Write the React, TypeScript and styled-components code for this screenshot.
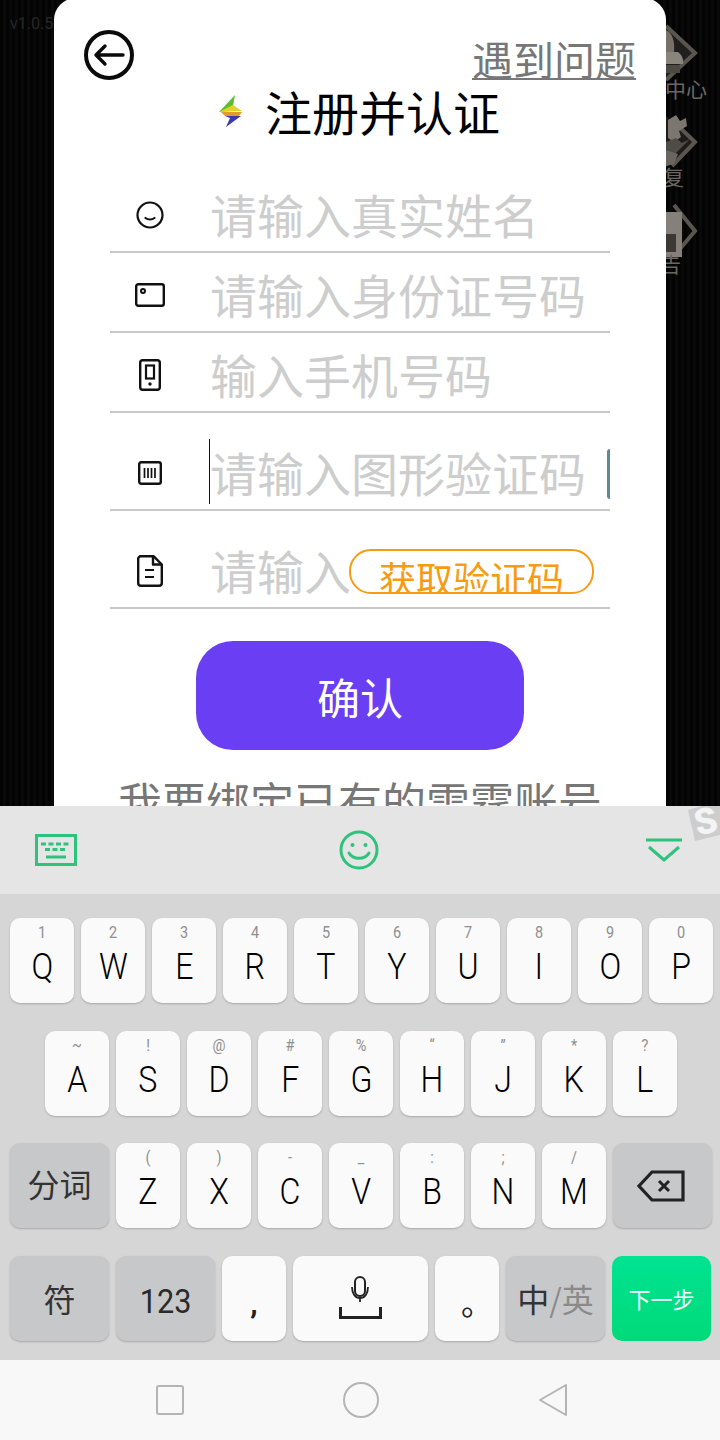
import React from "react"
import styled, { createGlobalStyle } from "styled-components"

const Global = createGlobalStyle`
  html, body {
    margin: 0;
    padding: 0;
    background: #000;
  }
  body {
    font-family: "Noto Sans CJK SC", "Noto Sans", sans-serif;
  }
  * {
    box-sizing: border-box;
  }
`

const Screen = styled.div`
  width: 720px;
  height: 1440px;
  display: flex;
  flex-direction: column;
  overflow: hidden;
  position: relative;
`

/* game scene behind the dialog */
const Scene = styled.div`
  height: 806px;
  flex: none;
  position: relative;
  overflow: hidden;
  display: flex;
  justify-content: center;
  background: repeating-linear-gradient(90deg, #030303 0 3px, #090909 3px 6px);
`

const Version = styled.div`
  position: absolute;
  left: 10px;
  top: 14px;
  font: 16px "Roboto", sans-serif;
  color: #272727;
`

const SideMenu = styled.div`
  position: absolute;
  left: 666px;
  top: 0;
  width: 54px;
`

const Card = styled.div`
  width: 612px;
  height: 900px;
  flex: none;
  background: #fff;
  border-radius: 22px;
  margin-top: -2px;
  padding: 32px 30px 0;
`

const TopRow = styled.div`
  display: flex;
  justify-content: space-between;
  align-items: flex-start;
  height: 54px;
`

const Help = styled.a`
  font-size: 41px;
  line-height: 48px;
  margin-top: 4px;
  color: #777;
  text-decoration: underline;
  text-decoration-thickness: 2px;
  text-underline-offset: 2px;
`

const TitleRow = styled.div`
  display: flex;
  justify-content: center;
  align-items: center;
  gap: 25px;
  height: 60px;
  margin-right: 4px;
`

const Title = styled.h1`
  margin: -6px 0 0;
  font-size: 47px;
  font-weight: 400;
  line-height: 60px;
  color: #000;
`

const BoltSlot = styled.div`
  display: flex;
  margin: -6px -3px 0 3px;
`

const Form = styled.div`
  margin: 29px 26px 0;
  display: flex;
  flex-direction: column;
`

const Row = styled.div<{ $tall?: boolean }>`
  height: ${p => (p.$tall ? 98 : 80)}px;
  border-bottom: 2px solid #c9c9c9;
  padding-bottom: 5px;
  display: flex;
  align-items: flex-end;
  position: relative;
  overflow: hidden;
`

const IconSlot = styled.div`
  width: 80px;
  height: 65px;
  padding-top: 3px;
  flex: none;
  display: flex;
  justify-content: center;
  align-items: center;
`

const Field = styled.div<{ $focused?: boolean }>`
  margin-left: 19px;
  font-size: 47px;
  line-height: 65px;
  height: 65px;
  color: #cdcdcd;
  white-space: nowrap;
  border-left: 1px solid ${p => (p.$focused ? "#111" : "transparent")};
`

const Captcha = styled.div`
  position: absolute;
  right: 0;
  top: 36px;
  width: 3px;
  height: 50px;
  border-radius: 3px 0 0 3px;
  background: #5f8a92;
`

const CodeButton = styled.div`
  position: absolute;
  left: 239px;
  top: 38px;
  width: 245px;
  height: 45px;
  border: 2px solid #f79b12;
  border-radius: 22px;
  background: #fff;
  color: #f79b12;
  font-size: 37px;
  line-height: 54px;
  text-align: center;
  overflow: hidden;
`

const Submit = styled.div`
  width: 328px;
  height: 109px;
  margin: 32px auto 0;
  border-radius: 37px;
  background: #6a3ef2;
  color: #fff;
  font-size: 43px;
  display: flex;
  align-items: center;
  justify-content: center;
`

const Bind = styled.div`
  margin-top: 21px;
  text-align: center;
  font-size: 44px;
  line-height: 60px;
  color: #777;
`

const Toolbar = styled.div`
  height: 88px;
  flex: none;
  background: #e5e5e5;
  display: grid;
  grid-template-columns: 1fr auto 1fr;
  align-items: center;
  padding: 0 38px 0 35px;
  position: relative;
  overflow: hidden;
`

const ToolEnd = styled.div`
  justify-self: end;
  display: flex;
`

const Keyboard = styled.div`
  height: 466px;
  flex: none;
  background: #d6d6d6;
  padding: 24px 8px 19px 10px;
  display: flex;
  flex-direction: column;
  justify-content: space-between;
`

const KeyRow = styled.div<{ $indent?: boolean }>`
  display: flex;
  gap: 7px;
  height: 85px;
  padding-left: ${p => (p.$indent ? 35 : 0)}px;
`

const Key = styled.div<{ $w?: number; $variant?: "plain" | "gray" | "green" }>`
  width: ${p => p.$w ?? 64}px;
  flex: none;
  border-radius: 10px;
  position: relative;
  display: flex;
  align-items: center;
  justify-content: center;
  color: #222;
  background: ${p =>
    p.$variant === "gray"
      ? "#c7c8ca"
      : p.$variant === "green"
      ? "linear-gradient(180deg, #00e392, #00da78)"
      : "#fafafa"};
  box-shadow: ${p => (p.$variant === "green" ? "none" : "0 1px 2px rgba(0,0,0,.22)")};
`

const Hint = styled.span`
  position: absolute;
  top: 4px;
  left: 0;
  right: 0;
  text-align: center;
  font: 17px "Roboto", sans-serif;
  color: #8f8f8f;
  transform: scaleX(0.85);
`

const Letter = styled.span`
  font: 300 36.5px "Roboto", sans-serif;
  color: #000;
  margin-top: 12px;
  transform: scaleX(0.88);
`

const Label = styled.span<{ $size?: number; $color?: string; $lift?: number }>`
  font-size: ${p => p.$size ?? 32}px;
  color: ${p => p.$color ?? "#333"};
  margin-top: ${p => -(p.$lift ?? 0)}px;
`

const NumLabel = styled.span`
  font: 34px "Roboto", sans-serif;
  color: #2a2a2a;
  margin-top: 5px;
  transform: scaleX(0.9);
`

const Comma = styled.span`
  font: 700 30px "Roboto", sans-serif;
  color: #222;
  margin-top: 10px;
`

const Period = styled.span`
  font-size: 32px;
  color: #222;
  margin: 6px 0 0 20px;
`

const BackspaceSlot = styled.div`
  display: flex;
  margin-right: 4px;
`

const NavBar = styled.div`
  height: 80px;
  flex: none;
  background: #f8f8f8;
  display: flex;
  align-items: center;
  justify-content: center;
  gap: 159px;
  padding-left: 4px;
`

const Back = () => (
  <svg width="50" height="50" viewBox="0 0 50 50" fill="none" stroke="#0a0a0a">
    <circle cx="25" cy="25" r="23" strokeWidth="4" />
    <path d="M39 25H12M21 16l-9 9 9 9" strokeWidth="3.4" strokeLinecap="round" strokeLinejoin="round" />
  </svg>
)

const Bolt = () => (
  <svg width="24" height="32" viewBox="0 0 24 32">
    <path d="M16 0 0 17l11-1 3-5z" fill="#5dbf2e" />
    <path d="M14 10 0 17l23-1z" fill="#e4d027" />
    <path d="M2 17h21l-3 4H6z" fill="#e39a2a" />
    <path d="M6 21h16L7 32l4-9z" fill="#3b3aa6" />
  </svg>
)

const Smile = () => (
  <svg width="28" height="28" viewBox="0 0 28 28" fill="none" stroke="#111" strokeWidth="2.2">
    <circle cx="14" cy="14" r="12.5" />
    <path d="M9.5 17c2.5 2 6.5 2 9 0" strokeLinecap="round" />
  </svg>
)

const IdCard = () => (
  <svg width="30" height="24" viewBox="0 0 30 24" fill="none" stroke="#111" strokeWidth="2.4">
    <rect x="1.200" y="1.200" width="27.600" height="21.600" rx="2" />
    <circle cx="8" cy="8" r="2" strokeWidth="2" />
  </svg>
)

const Phone = () => (
  <svg width="22" height="32" viewBox="0 0 22 32" fill="none" stroke="#111" strokeWidth="2.4">
    <rect x="1.200" y="1.200" width="19.600" height="29.600" rx="2.500" />
    <rect x="7" y="6.500" width="8" height="13" strokeWidth="2.2" />
    <circle cx="11" cy="25" r="1.700" fill="#111" stroke="none" />
  </svg>
)

const Barcode = () => (
  <svg width="24" height="24" viewBox="0 0 24 24" fill="none" stroke="#111" strokeWidth="2.4">
    <rect x="1.200" y="1.200" width="21.600" height="21.600" rx="2" />
    <path d="M6.500 7v10M10 7v10M13.500 7v10M17 7v10" strokeWidth="1.700" />
  </svg>
)

const Doc = () => (
  <svg width="26" height="32" viewBox="0 0 26 32" fill="none" stroke="#111" strokeWidth="2.4" strokeLinejoin="round">
    <path d="M3 1.200h13.500l8.300 8.300V28a2.800 2.800 0 0 1-2.800 2.800H4A2.800 2.800 0 0 1 1.200 28V3z" />
    <path d="M16 1.500V9.500h8.500" />
    <path d="M8 15h9M8 22h9" strokeWidth="2.2" />
  </svg>
)

const Side = () => (
  <svg width="54" height="290" viewBox="0 0 54 290" fill="none">
    {/* first badge */}
    <path d="M0 26 29 53 0 80z" fill="#211f1d" />
    <path d="M0 26 29 53 0 80" stroke="#5a564f" strokeWidth="4" />
    <path d="M0 30c6 3 9 10 8 22H0z" fill="#77716a" />
    <path d="M0 52h12c4 3 6 8 5 12H0z" fill="#8a857c" />
    <path d="M0 65h14v8H0z" fill="#4c4842" />
    {/* second badge */}
    <path d="M0 116 29 142 0 168z" fill="#1e1c1a" />
    <path d="M6 120 29 142 6 166" stroke="#5a564f" strokeWidth="4" />
    <path d="M2 120l8-5 4 6 6-3 1 8-8 5 2 6-7 5-6-4V124z" fill="#7b766e" />
    <path d="M0 142l10-4 6 5 8-4-14 14-2 10-8 3z" fill="#4f4b45" />
    <path d="M0 150l12 4-4 10-8 2z" fill="#6a655e" />
    {/* third badge */}
    <path d="M8 205 29 231 8 256" stroke="#5a564f" strokeWidth="4" />
    <path d="M0 212h16v45H0z" fill="#85807a" />
    <path d="M0 234h10v18H0z" fill="#3c3935" />
    <text x="-1" y="97" fill="#6a6762" fontSize="21" fontFamily="Noto Sans CJK SC">中心</text>
    <text x="-3" y="185" fill="#6a6762" fontSize="21" fontFamily="Noto Sans CJK SC">复</text>
    <text x="-6" y="272" fill="#6a6762" fontSize="21" fontFamily="Noto Sans CJK SC">告</text>
  </svg>
)

const KeyboardIcon = () => (
  <svg width="42" height="32" viewBox="0 0 42 32" fill="none" stroke="#2fc27c">
    <rect x="1.500" y="1.500" width="39" height="29" strokeWidth="3" />
    <path d="M6 10h30M10 15.500h22" strokeWidth="3" strokeDasharray="5 2.500" />
    <path d="M11 23h20" strokeWidth="3" />
  </svg>
)

const Emoji = () => (
  <svg width="40" height="40" viewBox="0 0 40 40" fill="none" stroke="#2fc27c" strokeWidth="3">
    <circle cx="20" cy="20" r="18" />
    <circle cx="13.500" cy="15" r="2" fill="#2fc27c" stroke="none" />
    <circle cx="26.500" cy="15" r="2" fill="#2fc27c" stroke="none" />
    <path d="M10 23c4 7 16 7 20 0" strokeLinecap="round" />
  </svg>
)

const Hide = () => (
  <svg width="36" height="24" viewBox="0 0 36 24" fill="none" stroke="#2fc27c" strokeWidth="3">
    <path d="M0 2h36M3 9l15 13L33 9" />
  </svg>
)

const SogouMark = () => (
  <SogouWrap>
    <svg width="32" height="36" viewBox="0 0 32 36">
      <path d="M0 4 32 -5v34L7 35z" fill="#cdcdcd" />
      <text x="7" y="28" fontSize="36" fontWeight="900" fontFamily="Roboto" fill="#f4f4f4" transform="rotate(-14 16 18)">S</text>
    </svg>
  </SogouWrap>
)

const SogouWrap = styled.div`
  position: absolute;
  right: 0;
  top: 0;
  display: flex;
`

const Backspace = () => (
  <svg width="48" height="32" viewBox="0 0 48 32" fill="none" stroke="#222" strokeWidth="3.200">
    <path d="M46 2H15L2 16l13 14h31z" />
    <path d="M22 11l10 10M32 11 22 21" strokeWidth="3" />
  </svg>
)

const Mic = () => (
  <svg width="44" height="44" viewBox="0 0 44 44" fill="none" stroke="#222">
    <rect x="16" y="1" width="10" height="19" rx="5" strokeWidth="2" />
    <path d="M13 11c0 7 3.500 11 8 11s8-4 8-11M21 22v4" strokeWidth="1.800" />
    <path d="M1.500 31v10.500h40V31" strokeWidth="3" />
  </svg>
)

const NavSquare = () => (
  <svg width="28" height="30" viewBox="0 0 28 30" fill="none" stroke="#b4b4b4" strokeWidth="2">
    <rect x="1" y="1" width="26" height="28" rx="2" />
  </svg>
)

const NavCircle = () => (
  <svg width="36" height="36" viewBox="0 0 36 36" fill="none" stroke="#b4b4b4" strokeWidth="2">
    <circle cx="18" cy="18" r="17" />
  </svg>
)

const NavBack = () => (
  <svg width="30" height="34" viewBox="0 0 30 34" fill="none" stroke="#b4b4b4" strokeWidth="2" strokeLinejoin="round">
    <path d="M28 2v30L2 17z" />
  </svg>
)

const row1 = [["Q", "1"], ["W", "2"], ["E", "3"], ["R", "4"], ["T", "5"], ["Y", "6"], ["U", "7"], ["I", "8"], ["O", "9"], ["P", "0"]]
const row2 = [["A", "~"], ["S", "!"], ["D", "@"], ["F", "#"], ["G", "%"], ["H", "“"], ["J", "”"], ["K", "*"], ["L", "?"]]
const row3 = [["Z", "("], ["X", ")"], ["C", "-"], ["V", "_"], ["B", ":"], ["N", ";"], ["M", "/"]]

const LetterKey = ({ k }: { k: string[] }) => (
  <Key>
    <Hint>{k[1]}</Hint>
    <Letter>{k[0]}</Letter>
  </Key>
)

export default function App() {
  return (
    <Screen>
      <Global />
      <Scene>
        <Version>v1.0.5</Version>
        <SideMenu>
          <Side />
        </SideMenu>
        <Card>
          <TopRow>
            <Back />
            <Help>遇到问题</Help>
          </TopRow>
          <TitleRow>
            <BoltSlot>
              <Bolt />
            </BoltSlot>
            <Title>注册并认证</Title>
          </TitleRow>
          <Form>
            <Row>
              <IconSlot>
                <Smile />
              </IconSlot>
              <Field>请输入真实姓名</Field>
            </Row>
            <Row>
              <IconSlot>
                <IdCard />
              </IconSlot>
              <Field>请输入身份证号码</Field>
            </Row>
            <Row>
              <IconSlot>
                <Phone />
              </IconSlot>
              <Field>输入手机号码</Field>
            </Row>
            <Row $tall>
              <IconSlot>
                <Barcode />
              </IconSlot>
              <Field $focused>请输入图形验证码</Field>
              <Captcha />
            </Row>
            <Row $tall>
              <IconSlot>
                <Doc />
              </IconSlot>
              <Field>请输入</Field>
              <CodeButton>获取验证码</CodeButton>
            </Row>
          </Form>
          <Submit>确认</Submit>
          <Bind>我要绑定已有的雷霆账号</Bind>
        </Card>
      </Scene>
      <Toolbar>
        <KeyboardIcon />
        <Emoji />
        <ToolEnd>
          <Hide />
        </ToolEnd>
        <SogouMark />
      </Toolbar>
      <Keyboard>
        <KeyRow>
          {row1.map(k => (
            <LetterKey key={k[0]} k={k} />
          ))}
        </KeyRow>
        <KeyRow $indent>
          {row2.map(k => (
            <LetterKey key={k[0]} k={k} />
          ))}
        </KeyRow>
        <KeyRow>
          <Key $w={99} $variant="gray">
            <Label $lift={6}>分词</Label>
          </Key>
          {row3.map(k => (
            <LetterKey key={k[0]} k={k} />
          ))}
          <Key $w={99} $variant="gray">
            <BackspaceSlot>
              <Backspace />
            </BackspaceSlot>
          </Key>
        </KeyRow>
        <KeyRow>
          <Key $w={99} $variant="gray">
            <Label>符</Label>
          </Key>
          <Key $w={99} $variant="gray">
            <NumLabel>123</NumLabel>
          </Key>
          <Key>
            <Comma>,</Comma>
          </Key>
          <Key $w={135}>
            <Mic />
          </Key>
          <Key>
            <Period>。</Period>
          </Key>
          <Key $w={99} $variant="gray">
            <Label>中</Label>
            <Label $color="#8a8a8a">/英</Label>
          </Key>
          <Key $w={99} $variant="green">
            <Label $size={22} $color="#fff">下一步</Label>
          </Key>
        </KeyRow>
      </Keyboard>
      <NavBar>
        <NavSquare />
        <NavCircle />
        <NavBack />
      </NavBar>
    </Screen>
  )
}
